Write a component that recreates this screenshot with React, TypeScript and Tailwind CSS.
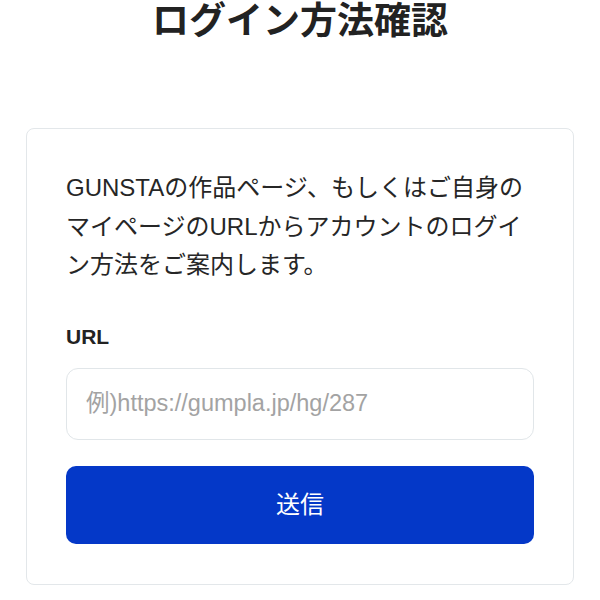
import React from "react";

export default function App() {
  return (
    <div className="min-h-[600px] w-[600px] bg-white font-['Liberation_Sans','Noto_Sans_CJK_JP',sans-serif] text-[#222]">
      <h1 className="pt-[3px] text-center text-[37px] font-bold leading-[37px] text-[#222]">
        ログイン方法確認
      </h1>
      <div className="mx-[26px] mt-[88px] rounded-[8px] border border-[#e3e7ea] px-[39px] pb-[40px] pt-[40px]">
        <p className="text-[24px] leading-[38.5px] text-[#262626]">
          GUNSTAの作品ページ、もしくはご自身のマイページのURLからアカウントのログイン方法をご案内します。
        </p>
        <label className="mt-[40px] block text-[21px] font-bold leading-[24px] text-[#222]">URL</label>
        <input
          type="text"
          placeholder="例)https://gumpla.jp/hg/287"
          className="mt-[19px] block h-[72px] w-full rounded-[12px] border border-[#e1e6e9] px-[19px] text-[23.5px] text-[#222] outline-none placeholder:text-[#a3a3a3]"
        />
        <button className="mt-[26px] block h-[78px] w-full rounded-[10px] bg-[#0438c8] text-[24px] text-white">
          送信
        </button>
      </div>
    </div>
  );
}
